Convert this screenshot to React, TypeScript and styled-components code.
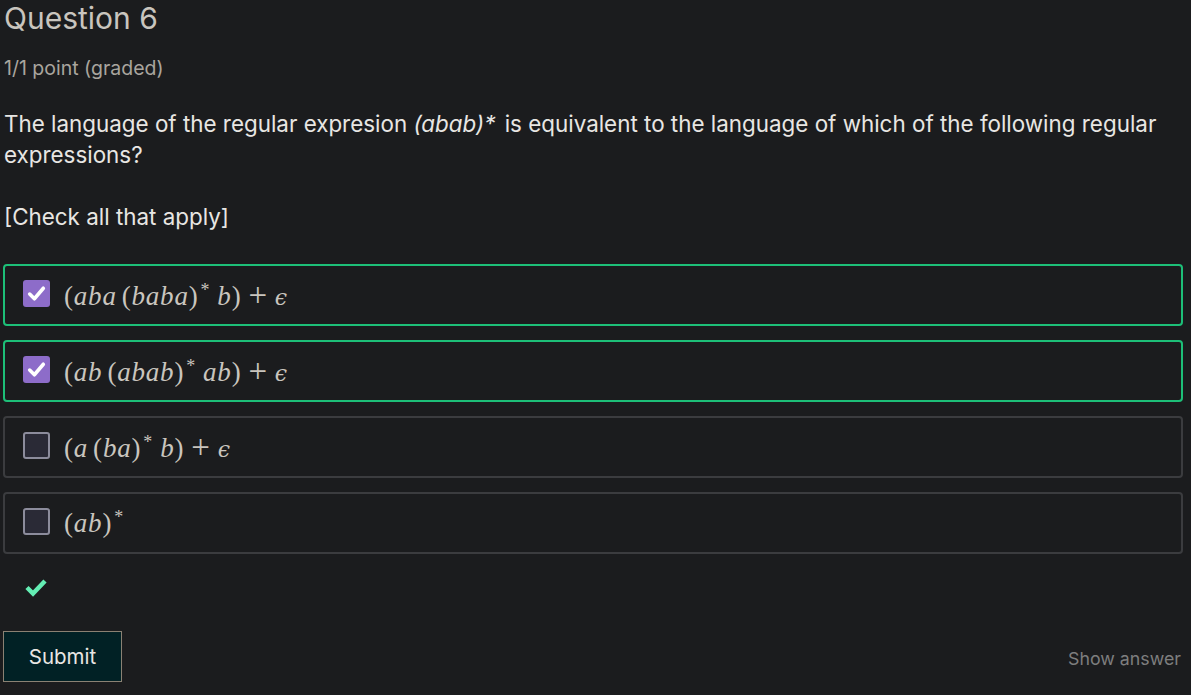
import React from "react";
import styled, { createGlobalStyle } from "styled-components";

const GlobalStyle = createGlobalStyle`
  html, body {
    margin: 0;
    padding: 0;
    background: #1b1c1e;
  }
  body {
    font-family: Inter, "Noto Sans", sans-serif;
    color: #c9c5be;
  }
`;

const Page = styled.div`
  padding: 0 8px 0 3px;
  height: 695px;
  box-sizing: border-box;
  display: flex;
  flex-direction: column;
`;

const Title = styled.h2`
  margin: 0 0 0 1px;
  font-size: 30px;
  font-weight: 400;
  line-height: 36px;
  color: #c9c5be;
`;

const Points = styled.div`
  margin: 20px 0 0 1px;
  font-size: 19.5px;
  line-height: 24px;
  color: #a9a59e;
`;

const Prompt = styled.p`
  margin: 28px 0 0 1px;
  font-size: 22.4px;
  line-height: 31px;
  color: #e8e6e3;
  em {
    font-style: italic;
    padding-right: 3px;
  }
`;

const Hint = styled.p`
  margin: 31px 0 0 1px;
  font-size: 22.4px;
  line-height: 31px;
  color: #e8e6e3;
`;

const Options = styled.div`
  margin-top: 32px;
  display: flex;
  flex-direction: column;
  gap: 14px;
`;

const Option = styled.label<{ $selected: boolean }>`
  display: flex;
  align-items: center;
  gap: 14px;
  height: 62px;
  box-sizing: border-box;
  padding: 0 0 0 18px;
  border: 2px solid ${(p) => (p.$selected ? "#1dbf78" : "#3b3c3f")};
  border-radius: 4px;
  cursor: pointer;
`;

const Box = styled.span<{ $checked: boolean }>`
  width: 27px;
  height: 27px;
  box-sizing: border-box;
  border-radius: 3px;
  display: flex;
  align-items: center;
  justify-content: center;
  margin-top: -3px;
  background: ${(p) => (p.$checked ? "#8d6cc9" : "#2a2a36")};
  border: ${(p) => (p.$checked ? "none" : "2px solid #8c8c9c")};
`;

const MathText = styled.span`
  font-family: "Liberation Serif", "DejaVu Serif", serif;
  font-size: 27px;
  letter-spacing: 0.8px;
  color: #c9c5be;
  white-space: nowrap;
  display: inline-flex;
  align-items: baseline;
`;

const V = styled.i`
  font-style: italic;
`;

const Paren = styled.span`
  font-style: normal;
`;

const Star = styled.span`
  font-size: 18px;
  position: relative;
  top: -9px;
  margin-left: 2px;
  margin-right: 7px;
`;

const Op = styled.span`
  margin: 0 7px;
  font-size: 33px;
  line-height: 1;
  position: relative;
  top: 1px;
`;

const Eps = styled.i`
  font-family: "DejaVu Serif", serif;
  font-style: italic;
  font-size: 22px;
`;

const Gap = styled.span`
  width: 5px;
  display: inline-block;
`;

const Mark = styled.div`
  margin: 22px 0 0 21px;
  height: 22px;
  display: flex;
  align-items: center;
`;

const Footer = styled.div`
  margin-top: 33px;
  display: flex;
  align-items: center;
  justify-content: space-between;
`;

const Submit = styled.button`
  width: 119px;
  height: 51px;
  background: #012125;
  border: 1px solid #8a8173;
  color: #e8e6e3;
  font-family: Inter, "Noto Sans", sans-serif;
  font-size: 20.5px;
  cursor: pointer;
`;

const ShowAnswer = styled.button`
  background: none;
  border: none;
  padding: 3px 2px 0 0;
  color: #7e7e7e;
  font-family: Inter, "Noto Sans", sans-serif;
  font-size: 17.8px;
  cursor: pointer;
`;

const Check = () => (
  <svg width="21" height="21" viewBox="0 0 20 20">
    <path d="M3.5 10.5l4.5 4.5 8.5-10" fill="none" stroke="#fff" strokeWidth="3.4" strokeLinecap="round" strokeLinejoin="round" />
  </svg>
);

const options = [
  {
    checked: true,
    math: (
      <>
        <Paren>(</Paren><V>aba</V><Gap /><Paren>(</Paren><V>baba</V><Paren>)</Paren><Star>*</Star><V>b</V><Paren>)</Paren>
        <Op>+</Op><Eps>ϵ</Eps>
      </>
    ),
  },
  {
    checked: true,
    math: (
      <>
        <Paren>(</Paren><V>ab</V><Gap /><Paren>(</Paren><V>abab</V><Paren>)</Paren><Star>*</Star><V>ab</V><Paren>)</Paren>
        <Op>+</Op><Eps>ϵ</Eps>
      </>
    ),
  },
  {
    checked: false,
    math: (
      <>
        <Paren>(</Paren><V>a</V><Gap /><Paren>(</Paren><V>ba</V><Paren>)</Paren><Star>*</Star><V>b</V><Paren>)</Paren>
        <Op>+</Op><Eps>ϵ</Eps>
      </>
    ),
  },
  {
    checked: false,
    math: (
      <>
        <Paren>(</Paren><V>ab</V><Paren>)</Paren><Star>*</Star>
      </>
    ),
  },
];

export default function App() {
  return (
    <>
      <GlobalStyle />
      <Page>
        <Title>Question 6</Title>
        <Points>1/1 point (graded)</Points>
        <Prompt>
          The language of the regular expresion <em>(abab)*</em> is equivalent to the language of which of the following regular expressions?
        </Prompt>
        <Hint>[Check all that apply]</Hint>
        <Options>
          {options.map((o, i) => (
            <Option key={i} $selected={o.checked}>
              <Box $checked={o.checked}>{o.checked && <Check />}</Box>
              <MathText>{o.math}</MathText>
            </Option>
          ))}
        </Options>
        <Mark>
          <svg width="24" height="20" viewBox="0 0 24 20">
            <path d="M3 10.5l6 6L21 4" fill="none" stroke="#64eeb4" strokeWidth="4.5" strokeLinejoin="miter" />
          </svg>
        </Mark>
        <Footer>
          <Submit>Submit</Submit>
          <ShowAnswer>Show answer</ShowAnswer>
        </Footer>
      </Page>
    </>
  );
}
